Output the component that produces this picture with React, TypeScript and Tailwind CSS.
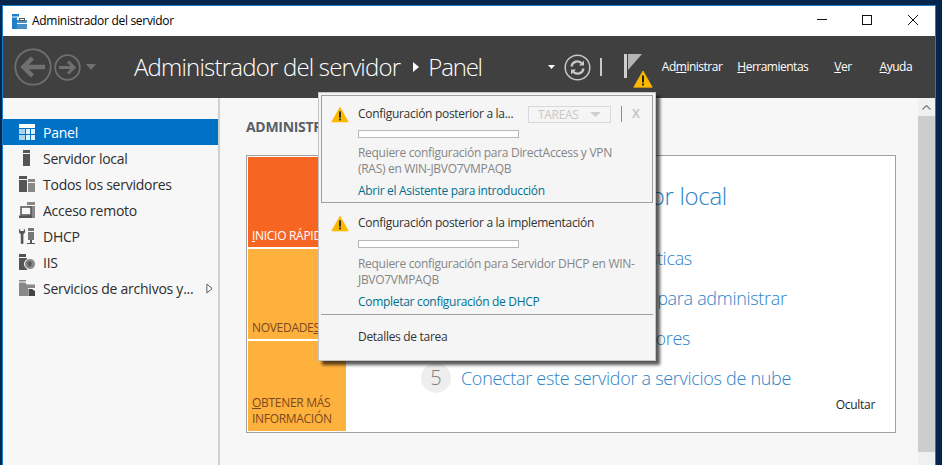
import React from "react";

function Warn({ className }: { className: string }) {
  return (
    <svg viewBox="0 0 20 18" className={className}>
      <path d="M10 1 L19.2 17.2 L0.8 17.2 Z" fill="#fdb900" stroke="#fdb900" strokeWidth="0.8" strokeLinejoin="round" />
      <rect x="9" y="5.5" width="2" height="7" fill="#222" />
      <rect x="9" y="13.5" width="2" height="2" fill="#222" />
    </svg>
  );
}

const navIcons: Record<string, React.ReactNode> = {
  panel: (
    <>
      <rect x="0" y="0" width="16" height="4" fill="#fff" />
      <rect x="0" y="5" width="6" height="5" fill="#a8d4f0" />
      <rect x="7" y="5" width="4" height="5" fill="#dceffb" />
      <rect x="12" y="5" width="4" height="5" fill="#dceffb" />
      <rect x="0" y="11" width="6" height="5" fill="#a8d4f0" />
      <rect x="7" y="11" width="4" height="5" fill="#dceffb" />
      <rect x="12" y="11" width="4" height="5" fill="#dceffb" />
    </>
  ),
  local: (
    <>
      <rect x="4" y="0" width="7" height="3" fill="#555" />
      <rect x="4" y="4" width="7" height="12" fill="#555" />
    </>
  ),
  all: (
    <>
      <rect x="0" y="0" width="8" height="3" fill="#555" />
      <rect x="0" y="4" width="8" height="12" fill="#555" />
      <rect x="9" y="3" width="7" height="3" fill="#888" />
      <rect x="9" y="7" width="7" height="9" fill="#888" />
    </>
  ),
  remote: (
    <>
      <rect x="8" y="0" width="8" height="3" fill="#888" />
      <rect x="8" y="4" width="8" height="12" fill="#888" />
      <rect x="2" y="5" width="10" height="8" fill="#f7f7f7" stroke="#555" strokeWidth="1.5" />
      <rect x="0" y="13.5" width="13" height="2.5" fill="#555" />
    </>
  ),
  dhcp: (
    <>
      <path d="M1.2 0.5 A3.2 3.2 0 1 0 4.8 0.5 V3 H1.2 Z" fill="#555" />
      <rect x="1.8" y="5" width="2.6" height="11" rx="1" fill="#555" />
      <rect x="9" y="0" width="6" height="3" fill="#777" />
      <rect x="9" y="4" width="6" height="8" fill="#777" />
      <rect x="11" y="12" width="2" height="3" fill="#555" />
      <rect x="8" y="15" width="8" height="1" fill="#555" />
    </>
  ),
  iis: (
    <>
      <rect x="0" y="0" width="7" height="3" fill="#555" />
      <rect x="0" y="4" width="8" height="12" fill="#555" />
      <circle cx="11" cy="10" r="5.5" fill="#888" stroke="#f7f7f7" />
      <path d="M8 9 L11 7 L13 9 L12 12 L10 13 Z" fill="#5c5c5c" />
    </>
  ),
  files: (
    <>
      <rect x="0" y="0" width="7" height="1.5" fill="#888" />
      <path d="M0 2.5 H6 L8 4.5 H16 V8 H9 V16 H0 Z" fill="#888" />
      <path d="M9.5 9 H13 L16 11 V16 H9.5 Z" fill="#444" />
    </>
  ),
};

function NavItem({ icon, label, active, arrow }: { icon: string; label: string; active?: boolean; arrow?: boolean }) {
  return (
    <div className={`flex h-[26px] items-center pl-[16px] pr-[2px] text-[14px] ${active ? "bg-[#0072c6] text-white" : "text-[#2d2d2d]"}`}>
      <svg viewBox="0 0 16 16" className="h-[16px] w-[16px] shrink-0">{navIcons[icon]}</svg>
      <span className="ml-[8px] flex-1 truncate tracking-[-0.25px]">{label}</span>
      {arrow && (
        <svg viewBox="0 0 8 12" className="mr-[3px] h-[11px] w-[7px]">
          <path d="M1 1 L7 6 L1 11 Z" fill="#fff" stroke="#444" />
        </svg>
      )}
    </div>
  );
}

function MenuLabel({ children, className }: { children: React.ReactNode; className: string }) {
  return <span className={`text-[12px] tracking-[-0.5px] text-white ${className}`}>{children}</span>;
}

function Tile({ className, children }: { className: string; children: React.ReactNode }) {
  return (
    <div className={`flex h-[90px] flex-col justify-end pl-[4px] text-[12px] leading-[16px] tracking-[-0.3px] ${className}`}>
      {children}
    </div>
  );
}

function Step({ n, children }: { n: number; children: React.ReactNode }) {
  return (
    <div className="flex h-[40px] items-center">
      <div className="flex h-[30px] w-[30px] items-center justify-center rounded-full bg-[#eeeeee] text-[20px] font-light text-[#808080]">{n}</div>
      <span className="ml-[10px] text-[18px] font-light tracking-[-0.3px] text-[#2b83c8]">{children}</span>
    </div>
  );
}

export default function App() {
  return (
    <div className="relative flex h-[465px] w-[942px] flex-col overflow-hidden bg-[#04264d] pl-[2px] pr-[6px] pt-[5px] font-['Open_Sans',sans-serif]">
      <div className="flex min-h-0 flex-1 flex-col border-x border-t border-[#1a7fc8]">
        {/* title bar */}
        <div className="flex h-[30px] shrink-0 items-center bg-white pl-[9px] text-[12px] text-black">
          <svg viewBox="0 0 15 15" className="h-[15px] w-[15px]">
            <rect x="0" y="0" width="7" height="2.5" fill="#1f7fc8" />
            <rect x="0" y="3.5" width="5" height="11.5" fill="#1f7fc8" />
            <rect x="5" y="6" width="10" height="9" fill="#4a90c8" />
            <rect x="7.5" y="4.5" width="5" height="2" fill="none" stroke="#555" />
            <rect x="5" y="9" width="10" height="1" fill="#fff" />
          </svg>
          <span className="ml-[5px] tracking-[-0.3px]">Administrador del servidor</span>
          <div className="ml-auto flex items-center pb-[2px] pr-[17px]">
            <svg viewBox="0 0 10 10" className="h-[10px] w-[10px]"><rect x="0" y="4" width="10" height="1" fill="#111" /></svg>
            <svg viewBox="0 0 10 10" className="ml-[35px] h-[10px] w-[10px]"><rect x="0.5" y="0.5" width="9" height="9" fill="none" stroke="#111" /></svg>
            <svg viewBox="0 0 10 10" className="ml-[36px] h-[10px] w-[10px]"><path d="M0 0 L10 10 M10 0 L0 10" stroke="#111" /></svg>
          </div>
        </div>

        {/* toolbar */}
        <div className="flex h-[62px] shrink-0 items-center bg-[#404040] pl-[11px]">
          <svg viewBox="0 0 38 38" className="h-[38px] w-[38px]">
            <circle cx="19" cy="19" r="17.7" fill="none" stroke="#707070" strokeWidth="1.8" />
            <path d="M31 19 H10 M18.5 10 L9.5 19 L18.5 28" fill="none" stroke="#707070" strokeWidth="4.5" />
          </svg>
          <svg viewBox="0 0 27 27" className="ml-[2px] h-[27px] w-[27px]">
            <circle cx="13.5" cy="13.5" r="12.3" fill="none" stroke="#707070" strokeWidth="1.8" />
            <path d="M5 13.5 H20 M14 7.5 L20 13.5 L14 19.5" fill="none" stroke="#707070" strokeWidth="3" />
          </svg>
          <svg viewBox="0 0 10 6" className="ml-[5px] h-[6px] w-[10px]"><path d="M0 0 H10 L5 6 Z" fill="#707070" /></svg>
          <span className="ml-[38px] text-[24px] font-light tracking-[-0.8px] text-white">Administrador del servidor</span>
          <svg viewBox="0 0 6 10" className="ml-[13px] h-[10px] w-[6px]"><path d="M0 0 L6 5 L0 10 Z" fill="#fff" /></svg>
          <span className="ml-[9px] text-[24px] font-light tracking-[-1.2px] text-white">Panel</span>
          <svg viewBox="0 0 7 4" className="ml-[66px] h-[4px] w-[7px]"><path d="M0 0 H7 L3.5 4 Z" fill="#fff" /></svg>
          <svg viewBox="0 0 27 27" className="ml-[9px] h-[27px] w-[27px]">
            <circle cx="13.5" cy="13.5" r="12.3" fill="none" stroke="#c8c8c8" strokeWidth="1.5" />
            <path d="M7.5 12.5 A6 6 0 0 1 18 9.5 M19.5 14.5 A6 6 0 0 1 9 17.5" fill="none" stroke="#c8c8c8" strokeWidth="2.2" />
            <path d="M20 6.5 V11.5 H15 Z M7 20.5 V15.5 H12 Z" fill="#c8c8c8" />
          </svg>
          <div className="ml-[9px] h-[18px] w-[2px] bg-[#c8c8c8]" />
          <div className="relative ml-[22px] mb-[2px] h-[24px] w-[30px]">
            <svg viewBox="0 0 18 24" className="h-[24px] w-[18px]">
              <rect x="0" y="0" width="3" height="24" fill="#d0d0d0" />
              <path d="M4 0 H18 L4 16 Z" fill="#b4b4b4" />
            </svg>
            <Warn className="absolute left-[9px] top-[16px] h-[18px] w-[20px]" />
          </div>
          <MenuLabel className="ml-[8px]">Ad<u>m</u>inistrar</MenuLabel>
          <MenuLabel className="ml-[15px]"><u>H</u>erramientas</MenuLabel>
          <MenuLabel className="ml-[26px]"><u>V</u>er</MenuLabel>
          <MenuLabel className="ml-[28px]"><u>A</u>yuda</MenuLabel>
        </div>

        {/* body */}
        <div className="flex min-h-0 flex-1">
          <div className="w-[217px] shrink-0 border-r-2 border-[#d0d0d0] bg-[#f7f7f7] pt-[21px]">
            <NavItem icon="panel" label="Panel" active />
            <NavItem icon="local" label="Servidor local" />
            <NavItem icon="all" label="Todos los servidores" />
            <NavItem icon="remote" label="Acceso remoto" />
            <NavItem icon="dhcp" label="DHCP" />
            <NavItem icon="iis" label="IIS" />
            <NavItem icon="files" label="Servicios de archivos y..." arrow />
          </div>

          <div className="min-w-0 flex-1 bg-[#f7f7f7] pl-[26px] pr-[22px] pt-[20px]">
            <div className="text-[14px] font-bold leading-[18px] tracking-[-0.3px] text-[#5a5f66]">ADMINISTRADOR</div>
            <div className="mt-[19px] flex h-[278px] border border-[#a0a0a0] bg-white p-[1px]">
              <div className="flex w-[98px] shrink-0 flex-col gap-[2px]">
                <Tile className="bg-[#f76523] pb-[3px] text-white"><span><u>I</u>NICIO RÁPIDO</span></Tile>
                <Tile className="bg-[#ffb13e] pb-[3px] text-[#7b4a1e]"><span>NOVEDADE<u>S</u></span></Tile>
                <Tile className="bg-[#ffb13e] pb-[4px] text-[#7b4a1e]"><span><u>O</u>BTENER MÁS</span><span>INFORMACIÓN</span></Tile>
              </div>
              <div className="relative flex-1 pl-[75px] pt-[21px]">
                <div className="flex h-[36px] items-center">
                  <span className="whitespace-nowrap text-[24px] font-light tracking-[-0.3px] text-[#2b83c8]">Configurar este servidor local</span>
                </div>
                <div className="mt-[24px]">
                  <Step n={2}>Agregar roles y características</Step>
                  <Step n={3}>Agregar otros servidores para administrar</Step>
                  <Step n={4}>Crear un grupo de servidores</Step>
                  <Step n={5}>Conectar este servidor a servicios de nube</Step>
                </div>
                <span className="absolute bottom-[17px] right-[19px] text-[12px] tracking-[-0.3px] text-[#222]">Ocultar</span>
              </div>
            </div>
          </div>

          {/* scrollbar */}
          <div className="flex w-[17px] shrink-0 flex-col bg-[#f0f0f0]">
            <div className="flex h-[18px] items-center justify-center">
              <svg viewBox="0 0 9 5" className="h-[5px] w-[9px]"><path d="M0.5 4.5 L4.5 0.5 L8.5 4.5" fill="none" stroke="#7a7a7a" strokeWidth="1.2" /></svg>
            </div>
            <div className="h-[336px] bg-[#cdcdcd]" />
          </div>
        </div>
      </div>

      {/* task popup */}
      <div className="absolute left-[318px] top-[92px] h-[269px] w-[338px] border border-[#c4c4c4] bg-[#f5f5f5] p-[2px] text-[12px] tracking-[-0.3px] shadow-[4px_4px_3px_rgba(0,0,0,0.65)]">
        <div className="h-[108px] border border-[#a0a0a0] pl-[36px] pr-[8px] pt-[9px]">
          <div className="relative flex h-[18px] items-center">
            <Warn className="absolute left-[-27px] top-[1px] h-[17px] w-[18px]" />
            <span className="text-[#333]">Configuración posterior a la...</span>
            <div className="ml-auto mr-[1px] flex h-[17px] w-[83px] items-center justify-between border border-[#d8d8d8] px-[9px] pt-[1px] text-[#c8c8c8]">
              <span>TAREAS</span>
              <svg viewBox="0 0 11 5" className="h-[5px] w-[11px]"><path d="M0 0 H11 L5.5 5 Z" fill="#d0d0d0" /></svg>
            </div>
            <div className="ml-[9px] h-[16px] w-px bg-[#8c8c8c]" />
            <span className="ml-[10px] w-[12px] font-bold text-[#c8c8c8]">X</span>
          </div>
          <div className="mt-[7px] h-[8px] w-[161px] border border-[#b8b8b8] bg-white" />
          <div className="mt-[7px] leading-[16px] text-[#858585]">
            Requiere configuración para DirectAccess y VPN<br />(RAS) en WIN-JBVO7VMPAQB
          </div>
          <div className="mt-[6px] leading-[16px] text-[#00708f]">Abrir el Asistente para introducción</div>
        </div>
        <div className="h-[111px] pl-[37px] pr-[8px] pt-[11px]">
          <div className="relative flex h-[18px] items-center">
            <Warn className="absolute left-[-27px] top-[1px] h-[17px] w-[18px]" />
            <span className="text-[#333]">Configuración posterior a la implementación</span>
          </div>
          <div className="mt-[8px] h-[8px] w-[161px] border border-[#b8b8b8] bg-white" />
          <div className="mt-[8px] leading-[16px] text-[#858585]">
            Requiere configuración para Servidor DHCP en WIN-<br />JBVO7VMPAQB
          </div>
          <div className="mt-[6px] leading-[16px] text-[#00708f]">Completar configuración de DHCP</div>
        </div>
        <div className="border-t border-[#a0a0a0] pl-[37px] pt-[14px] leading-[16px] text-[#333]">Detalles de tarea</div>
      </div>
    </div>
  );
}
